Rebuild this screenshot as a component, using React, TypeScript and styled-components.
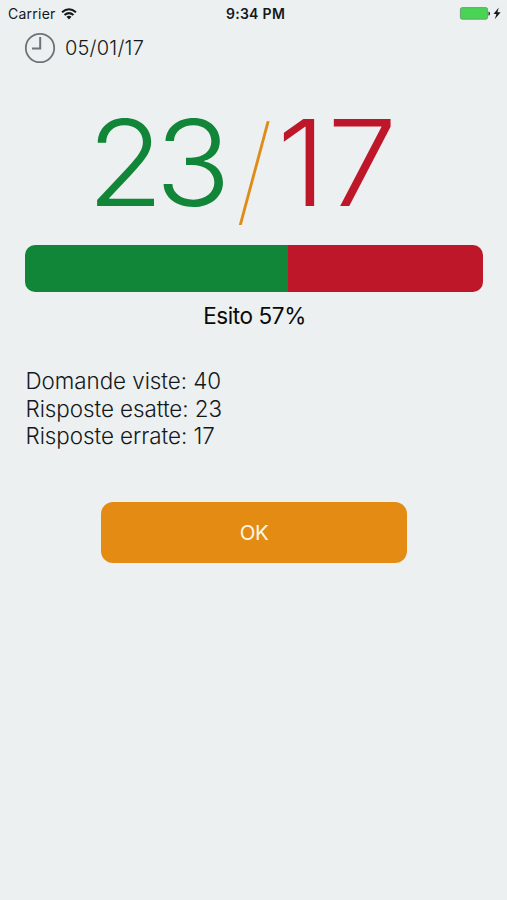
import React from 'react';
import styled, { createGlobalStyle } from 'styled-components';

const correct = 23;
const wrong = 17;

const GlobalStyle = createGlobalStyle`
  * { box-sizing: border-box; }
  body { margin: 0; background: #ecf0f1; }
`;

const Screen = styled.main`
  display: flex;
  flex-direction: column;
  width: 507px;
  height: 900px;
  overflow: hidden;
  background: #ecf0f1;
  color: #15181a;
  font-family: Inter, 'Liberation Sans', sans-serif;
`;

const StatusBar = styled.header`
  display: grid;
  grid-template-columns: 1fr auto 1fr;
  align-items: center;
  height: 27px;
  padding: 0 5px 0 8px;
  font-size: 14px;
  line-height: 27px;
`;

const Carrier = styled.div`
  display: flex;
  align-items: center;
  gap: 5px;
  letter-spacing: 0.25px;
`;

const Time = styled.div`
  padding-left: 1px;
  font-weight: 600;
  letter-spacing: 0.3px;
`;

const Power = styled.div`
  display: flex;
  align-items: center;
  justify-content: flex-end;
`;

const DateRow = styled.div`
  display: flex;
  align-items: center;
  gap: 9px;
  height: 42px;
  padding-left: 24px;
`;

const DateText = styled.time`
  font-size: 20px;
  font-weight: 350;
  letter-spacing: 0.2px;
`;

const Score = styled.div`
  display: flex;
  height: 176px;
  padding: 22px 0 0 86.5px;
  font-size: 119px;
  line-height: 144px;
`;

const ScoreNumber = styled.span<{ $color: string; $width: number; $spacing: number }>`
  flex: none;
  width: ${(p) => p.$width}px;
  color: ${(p) => p.$color};
  font-weight: 300;
  letter-spacing: ${(p) => p.$spacing}px;
  white-space: nowrap;
  transform: scaleX(1.05);
  transform-origin: left;
`;

const Slash = styled.span`
  flex: none;
  width: 42px;
  padding-top: 6px;
  color: #e08b16;
  font-weight: 100;
`;

const Bar = styled.div`
  display: flex;
  height: 47px;
  margin: 0 24px 0 25px;
  overflow: hidden;
  border-radius: 10px;
`;

const Segment = styled.div<{ $color: string; $share: number }>`
  flex: ${(p) => p.$share} 0 0;
  background: ${(p) => p.$color};
`;

const Outcome = styled.div`
  height: 46px;
  padding-left: 2px;
  color: #080a0b;
  font-size: 22.5px;
  line-height: 47px;
  letter-spacing: -0.4px;
  text-align: center;
`;

const Summary = styled.div`
  margin: 29px 0 0 25.5px;
  font-size: 22.4px;
  font-weight: 350;
  line-height: 27.7px;
  letter-spacing: -0.05px;
`;

const OkButton = styled.button`
  width: 306px;
  height: 61px;
  margin: 52px 0 0 101px;
  padding: 0;
  border: 0;
  border-radius: 12px;
  background: #e38b13;
  color: #fff6e4;
  font: 400 20.5px Inter, 'Liberation Sans', sans-serif;
  letter-spacing: -0.4px;
`;

const WifiIcon = () => (
  <svg width="16" height="12" viewBox="0 0 16 12" fill="none" stroke="#15181a" strokeWidth="2">
    <path d="M1 4.2Q8-1.7 15 4.2M3.5 7Q8 3.2 12.5 7" />
    <path d="M5.5 8.8Q8 6.8 10.5 8.8L8 11.5Z" fill="#15181a" stroke="none" />
  </svg>
);

const BatteryIcon = () => (
  <svg width="43" height="15" viewBox="0 0 43 15">
    <rect x="1.4" y="1.6" width="27.2" height="11.6" rx="1.8" fill="#47d553" stroke="#6d8c70" strokeWidth=".8" />
    <path d="M29.5 5.7h.8q1.5 1.7 0 3.8h-.8z" fill="#15181a" />
    <path d="M39.8 1.6L34.5 8h2.9l-1.6 5.2 5.8-7h-3.2z" fill="#15181a" />
  </svg>
);

const ClockIcon = () => (
  <svg width="32" height="32" viewBox="0 0 32 32" fill="none" stroke="#6f7375">
    <circle cx="16" cy="16" r="14.2" strokeWidth="1.8" />
    <path d="M16.2 5v11.6H8" strokeWidth="2" />
  </svg>
);

export default function App() {
  return (
    <Screen>
      <GlobalStyle />
      <StatusBar>
        <Carrier>Carrier <WifiIcon /></Carrier>
        <Time>9:34 PM</Time>
        <Power><BatteryIcon /></Power>
      </StatusBar>
      <DateRow>
        <ClockIcon />
        <DateText>05/01/17</DateText>
      </DateRow>
      <Score>
        <ScoreNumber $color="#128638" $width={148.5} $spacing={-8}>{correct}</ScoreNumber>
        <Slash>/</Slash>
        <ScoreNumber $color="#be172a" $width={140} $spacing={1}>{wrong}</ScoreNumber>
      </Score>
      <Bar>
        <Segment $color="#128638" $share={correct} />
        <Segment $color="#be172a" $share={wrong} />
      </Bar>
      <Outcome>Esito 57%</Outcome>
      <Summary>
        <div>Domande viste: {correct + wrong}</div>
        <div>Risposte esatte: {correct}</div>
        <div>Risposte errate: {wrong}</div>
      </Summary>
      <OkButton>OK</OkButton>
    </Screen>
  );
}
